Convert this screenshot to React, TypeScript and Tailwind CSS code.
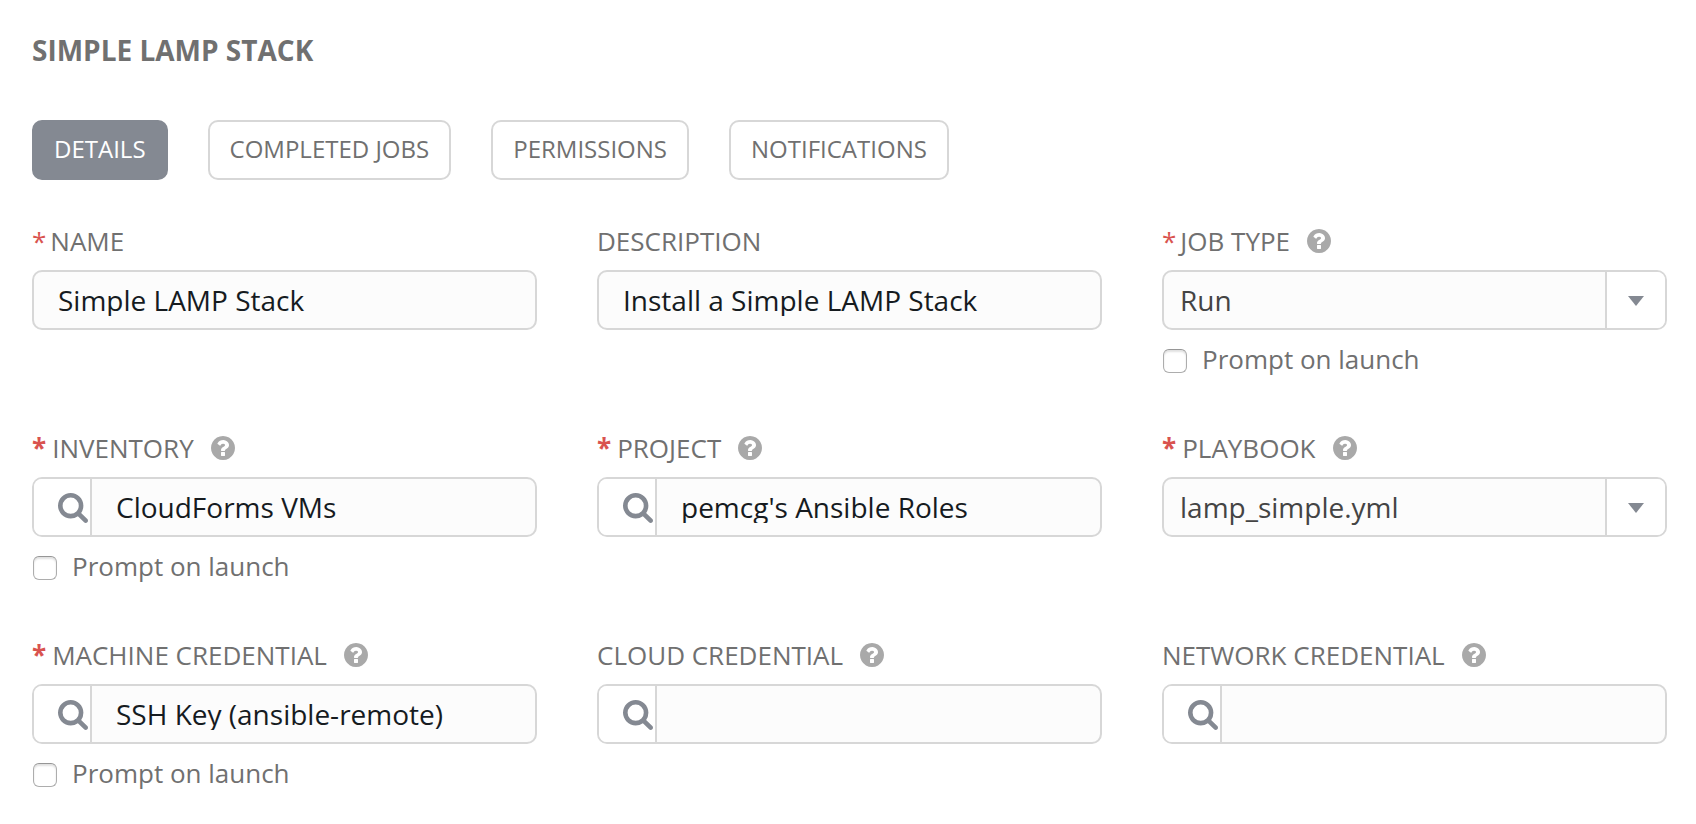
import { useId, useState } from "react";
import type { ReactNode } from "react";

const TABS = ["DETAILS", "COMPLETED JOBS", "PERMISSIONS", "NOTIFICATIONS"];

function SearchIcon() {
  return (
    <svg viewBox="64 128 1664 1664" className="size-[30px] fill-[#848992]" aria-hidden="true">
      <path d="M1216 832q0-185-131.5-316.5t-316.5-131.5-316.5 131.5-131.5 316.5 131.5 316.5 316.5 131.5 316.5-131.5 131.5-316.5zm512 832q0 52-38 90t-90 38q-54 0-90-38l-343-342q-179 124-399 124-143 0-273.5-55.5t-225-150-150-225-55.5-273.5 55.5-273.5 150-225 225-150 273.5-55.5 273.5 55.5 225 150 150 225 55.5 273.5q0 220-124 399l343 343q37 37 37 90z" />
    </svg>
  );
}

function HelpIcon() {
  return (
    <svg viewBox="128 128 1536 1536" className="size-6 fill-[#a9a9a9]" aria-hidden="true">
      <path d="M1024 1376v-192q0-14-9-23t-23-9h-192q-14 0-23 9t-9 23v192q0 14 9 23t23 9h192q14 0 23-9t9-23zm256-672q0-88-55.5-163t-138.5-116-170-41q-243 0-371 213-15 24 8 42l132 100q7 6 19 6 16 0 25-12 53-68 86-92 34-24 86-24 48 0 85.5 26t37.5 59q0 38-20 61t-68 45q-63 28-115.5 86.5t-52.5 125.5v36q0 14 9 23t23 9h192q14 0 23-9t9-23q0-19 21.5-49.5t54.5-49.5q32-18 49-28.5t46-35 44.5-48 28-60.5 12.5-81zm384 192q0 209-103 385.5t-279.5 279.5-385.5 103-385.5-103-279.5-279.5-103-385.5 103-385.5 279.5-279.5 385.5-103 385.5 103 279.5 279.5 103 385.5z" />
    </svg>
  );
}

type FieldProps = {
  label: string;
  required?: "regular" | "bold";
  help?: boolean;
  prompt?: boolean;
  children: (id: string) => ReactNode;
};

function Field({ label, required, help, prompt, children }: FieldProps) {
  const id = useId();
  return (
    <div className="min-w-0">
      <div className="mb-[11px] flex h-9 items-center gap-[17px]">
        <label htmlFor={id} className="flex text-[26px] leading-9 whitespace-nowrap text-[#707070]">
          {required && (
            <span
              className={
                required === "bold" ? "mr-[6px] font-bold text-[#d9534f]" : "mr-1 text-[#d9534f]"
              }
            >
              *
            </span>
          )}
          {label}
        </label>
        {help && (
          <button type="button" aria-label={"Help for " + label} className="cursor-pointer">
            <HelpIcon />
          </button>
        )}
      </div>
      {children(id)}
      {prompt && (
        <label className="mt-[11px] flex h-9 items-center gap-[15px] pl-px text-[26px] leading-9 text-[#707070]">
          <input
            type="checkbox"
            className="mt-1 size-6 shrink-0 appearance-none rounded-[6px] border border-[#adadad] border-t-[#969696] bg-white shadow-[inset_0_2px_2px_rgba(0,0,0,0.12)] checked:bg-[#848992]"
          />
          Prompt on launch
        </label>
      )}
    </div>
  );
}

function TextInput({ id, value }: { id: string; value: string }) {
  return (
    <div className="flex h-[60px] items-center rounded-[10px] border-2 border-[#d7d7d7] bg-[#fcfcfc] px-6">
      <input
        id={id}
        type="text"
        defaultValue={value}
        className="h-8 min-w-0 flex-1 bg-transparent text-[28px] text-[#161b1f] outline-none"
      />
    </div>
  );
}

function LookupInput({ id, value, label }: { id: string; value: string; label: string }) {
  return (
    <div className="flex h-[60px] items-center overflow-hidden rounded-[10px] border-2 border-[#d7d7d7] bg-[#fcfcfc] pr-6">
      <button
        type="button"
        aria-label={"Look up " + label}
        className="mr-6 flex w-[58px] shrink-0 items-center justify-end self-stretch border-r-2 border-[#d7d7d7] bg-white pt-0.5 pr-[2px]"
      >
        <SearchIcon />
      </button>
      <input
        id={id}
        type="text"
        defaultValue={value}
        className="h-8 min-w-0 flex-1 bg-transparent text-[28px] text-[#161b1f] outline-none"
      />
    </div>
  );
}

function SelectInput({ id, options }: { id: string; options: string[] }) {
  return (
    <div className="grid h-[60px] overflow-hidden rounded-[10px] border-2 border-[#d7d7d7] bg-[#fcfcfc]">
      <select
        id={id}
        className="w-full appearance-none bg-transparent pr-[70px] pl-4 text-[28px] text-[#444444] outline-none [grid-area:1/1]"
      >
        {options.map((option) => (
          <option key={option}>{option}</option>
        ))}
      </select>
      <span className="pointer-events-none flex w-[60px] items-center justify-center justify-self-end border-l-2 border-[#d7d7d7] bg-white pt-0.5 [grid-area:1/1]">
        <svg viewBox="0 0 16 10" className="h-[10px] w-4 fill-[#848992]" aria-hidden="true">
          <path d="M0 0h16L8 10z" />
        </svg>
      </span>
    </div>
  );
}

export default function App() {
  const [active, setActive] = useState("DETAILS");
  return (
    <main className="bg-white pt-[31px] pr-[29px] pb-8 pl-8 font-['Open_Sans','Noto_Sans',sans-serif]">
      <h1 className="mb-[51px] text-[28px] leading-[38px] font-bold text-[#707070]">SIMPLE LAMP STACK</h1>
      <nav className="mb-[43px] flex gap-10">
        {TABS.map((tab) => (
          <button
            key={tab}
            type="button"
            onClick={() => setActive(tab)}
            className={
              tab === active
                ? "h-[60px] rounded-[10px] border-2 border-[#848992] bg-[#848992] px-5 pb-0.5 text-[24px] text-white"
                : "h-[60px] rounded-[10px] border-2 border-[#d7d7d7] bg-white px-5 pb-0.5 text-[24px] text-[#707070]"
            }
          >
            {tab}
          </button>
        ))}
      </nav>
      <form className="grid grid-cols-3 gap-x-[60px] gap-y-[53px]">
        <Field label="NAME" required="regular">
          {(id) => <TextInput id={id} value="Simple LAMP Stack" />}
        </Field>
        <Field label="DESCRIPTION">{(id) => <TextInput id={id} value="Install a Simple LAMP Stack" />}</Field>
        <Field label="JOB TYPE" required="regular" help prompt>
          {(id) => <SelectInput id={id} options={["Run"]} />}
        </Field>
        <Field label="INVENTORY" required="bold" help prompt>
          {(id) => <LookupInput id={id} label="inventory" value="CloudForms VMs" />}
        </Field>
        <Field label="PROJECT" required="bold" help>
          {(id) => <LookupInput id={id} label="project" value="pemcg's Ansible Roles" />}
        </Field>
        <Field label="PLAYBOOK" required="bold" help>
          {(id) => <SelectInput id={id} options={["lamp_simple.yml"]} />}
        </Field>
        <Field label="MACHINE CREDENTIAL" required="bold" help prompt>
          {(id) => <LookupInput id={id} label="machine credential" value="SSH Key (ansible-remote)" />}
        </Field>
        <Field label="CLOUD CREDENTIAL" help>
          {(id) => <LookupInput id={id} label="cloud credential" value="" />}
        </Field>
        <Field label="NETWORK CREDENTIAL" help>
          {(id) => <LookupInput id={id} label="network credential" value="" />}
        </Field>
      </form>
    </main>
  );
}
